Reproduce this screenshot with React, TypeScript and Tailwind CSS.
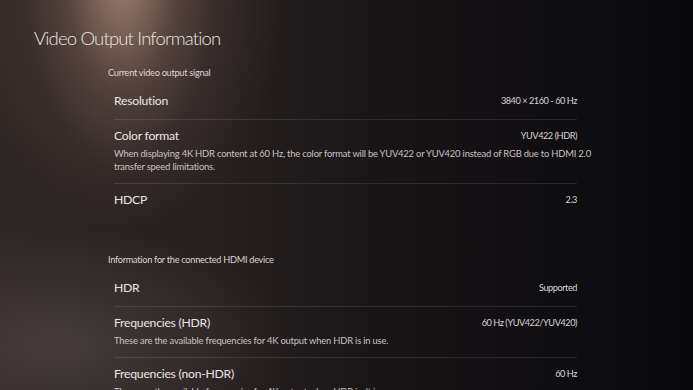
type Row = { title: string; value: string; desc?: string[]; divider?: boolean };

const current: Row[] = [
  { title: "Resolution", value: "3840 × 2160 - 60 Hz", divider: true },
  {
    title: "Color format",
    value: "YUV422 (HDR)",
    desc: [
      "When displaying 4K HDR content at 60 Hz, the color format will be YUV422 or YUV420 instead of RGB due to HDMI 2.0",
      "transfer speed limitations.",
    ],
    divider: true,
  },
  { title: "HDCP", value: "2.3" },
];

const device: Row[] = [
  { title: "HDR", value: "Supported", divider: true },
  {
    title: "Frequencies (HDR)",
    value: "60 Hz (YUV422/YUV420)",
    desc: ["These are the available frequencies for 4K output when HDR is in use."],
    divider: true,
  },
  {
    title: "Frequencies (non-HDR)",
    value: "60 Hz",
    desc: ["These are the available frequencies for 4K output when HDR isn't in use."],
  },
];

function InfoRow({ row }: { row: Row }) {
  return (
    <div
      className={`ml-[6px] w-[463px] pt-[8px] pb-[10px] ${
        row.divider ? "border-b border-white/10" : ""
      }`}
    >
      <div className="flex items-center justify-between h-[16px]">
        <span className="text-[12.2px] tracking-[-0.02em] text-[#ede4e3]">{row.title}</span>
        <span className="text-[9.2px] tracking-[-0.05em] text-[#dcd3d2]">{row.value}</span>
      </div>
      {row.desc && (
        <div className="mt-[3px] text-[9.4px] leading-[13px] tracking-[-0.02em] text-[#cbc1c0]">
          {row.desc.map((d) => (
            <div key={d} className="whitespace-nowrap">{d}</div>
          ))}
        </div>
      )}
    </div>
  );
}

export default function App() {
  return (
    <div className="relative w-[693px] h-[390px] overflow-hidden bg-[#0b0a0e] font-['Lato',sans-serif]">
      {/* backdrop glow */}
      <div className="absolute inset-0 bg-[radial-gradient(ellipse_95px_200px_at_122px_-30px,rgba(185,148,130,0.75),rgba(120,94,84,0.3)_60%,transparent_100%),radial-gradient(ellipse_160px_230px_at_125px_0px,rgba(125,98,88,0.45),transparent_100%),radial-gradient(ellipse_230px_120px_at_60px_345px,rgba(88,78,78,0.55),transparent_100%),linear-gradient(90deg,#2e2624_0%,#272020_30%,#161315_60%,#08080b_100%)]" />
      <div className="relative pt-[26px] pl-[34px]">
        <h1 className="text-[18.5px] leading-[24px] font-light tracking-[-0.045em] text-[#eee5e4]">
          Video Output Information
        </h1>
        <div className="ml-[74px]">
          <div className="mt-[17px] text-[9.2px] leading-[12px] tracking-[-0.03em] text-[#ded4d3]">
            Current video output signal
          </div>
          <div className="mt-[6px]">
            {current.map((r) => (
              <InfoRow key={r.title} row={r} />
            ))}
          </div>
          <div className="mt-[36px] text-[9.2px] leading-[12px] tracking-[-0.03em] text-[#ded4d3]">
            Information for the connected HDMI device
          </div>
          <div className="mt-[6px]">
            {device.map((r) => (
              <InfoRow key={r.title} row={r} />
            ))}
          </div>
        </div>
      </div>
    </div>
  );
}
